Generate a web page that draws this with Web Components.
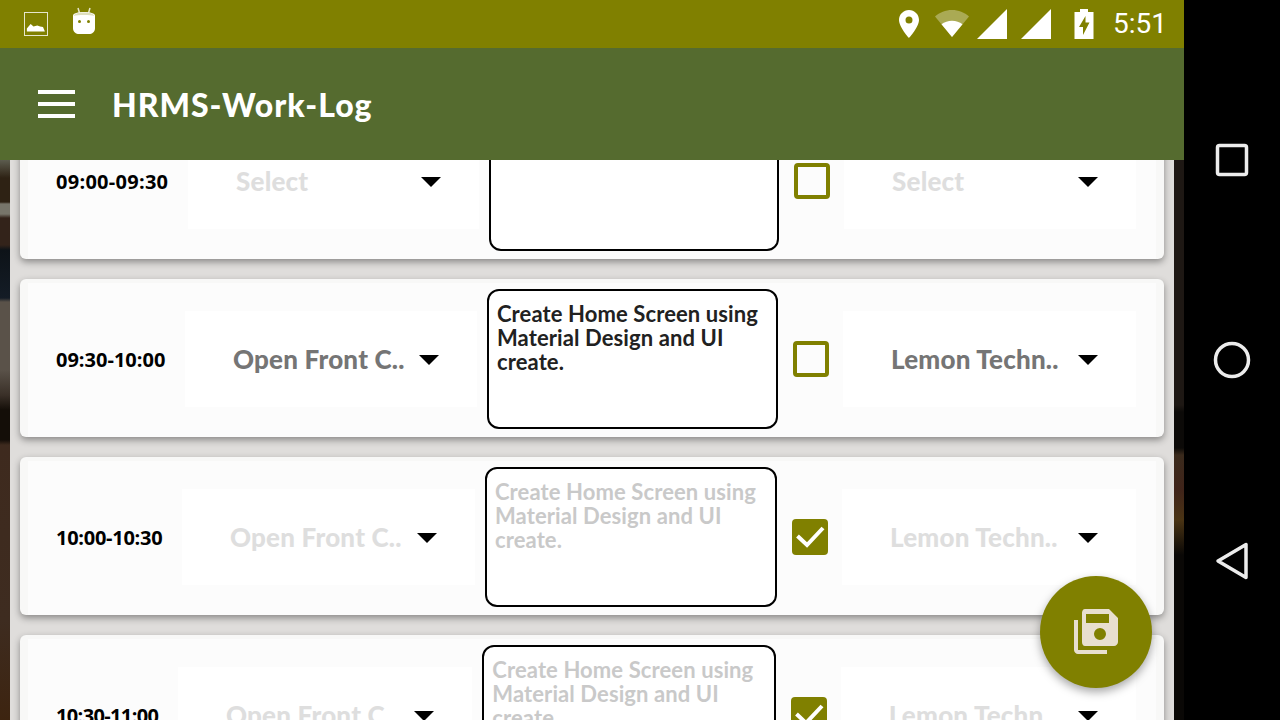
<!DOCTYPE html>
<html>
<head>
<meta charset="utf-8">
<style>
    html, body { margin: 0; height: 100%; background: #000; overflow: hidden; }
    body { display: flex; width: 1280px; height: 720px; }
</style>
</head>
<body>
<work-log-screen>
    <status-bar></status-bar>
    <app-bar title="HRMS-Work-Log"></app-bar>
    <log-list>
        <log-row time="09:00-09:30" time-width="112" project="Select" company="Select" faded-select check="off"></log-row>
        <log-row time="09:30-10:00" time-width="109" project="Open Front C.." company="Lemon Techn.." note="Create Home Screen using Material Design and UI create." check="off"></log-row>
        <log-row time="10:00-10:30" time-width="106" project="Open Front C.." company="Lemon Techn.." note="Create Home Screen using Material Design and UI create." faded check="on"></log-row>
        <log-row time="10:30-11:00" time-width="102" project="Open Front C.." company="Lemon Techn.." note="Create Home Screen using Material Design and UI create." faded check="on"></log-row>
    </log-list>
    <save-fab></save-fab>
</work-log-screen>
<nav-bar></nav-bar>

<script>
class WorkLogScreen extends HTMLElement {
    constructor() {
        super();
        this.attachShadow({ mode: "open" });
    }
    connectedCallback() {
        this.shadowRoot.innerHTML = `
            <style>
                :host {
                    display: flex;
                    flex-direction: column;
                    position: relative;
                    width: 1184px;
                    height: 720px;
                    overflow: hidden;
                    background-repeat: no-repeat;
                    background-size: 10px 100%;
                    background-position: left top, right top;
                    background-image:
                        linear-gradient(#5c5c4e 160px, #2e2214 178px, #2e2214 202px, #77756a 204px, #77756a 214px, #33231a 218px, #33231a 245px, #0d1318 250px, #141c26 298px, #5a5249 302px, #5a5249 370px, #3a3028 395px, #140e08 410px, #140e08 440px, #3e2a1e 445px, #3e2c20 620px, #3d2410 720px),
                        linear-gradient(#1e1814 160px, #1e1814 405px, #0c0a08 412px, #0c0a08 448px, #3a2a1c 455px, #40241a 490px, #4a3414 520px, #0a0806 555px, #0a0806 720px);
                }
            </style>
            <slot></slot>
        `;
    }
}
customElements.define("work-log-screen", WorkLogScreen);

class StatusBar extends HTMLElement {
    constructor() {
        super();
        this.attachShadow({ mode: "open" });
    }
    connectedCallback() {
        this.shadowRoot.innerHTML = `
            <style>
                :host {
                    display: flex;
                    align-items: center;
                    flex: none;
                    height: 48px;
                    background: #808000;
                    position: relative;
                    z-index: 2;
                }
                svg { display: block; flex: none; }
                .left { display: flex; align-items: center; margin-left: 24px; gap: 24px; }
                .right { display: flex; align-items: center; margin-left: auto; margin-right: 17px; }
                .time {
                    font: 400 28px Roboto, sans-serif;
                    color: #fff;
                    margin-left: 19px;
                    line-height: 48px;
                }
            </style>
            <div class="left">
                <svg width="24" height="24" viewBox="0 0 24 24">
                    <rect x="0.5" y="0.5" width="23" height="23" fill="none" stroke="#e6e6cc" stroke-width="1"/>
                    <path d="M3 20V17L7 12.500L10 15L14 14L17 15L20 15.500L22 20Z" fill="#fff" transform="translate(0 -0.500) scale(.95 1)"/>
                </svg>
                <svg width="24" height="28" viewBox="0 0 24 28" style="margin-bottom:6px">
                    <path d="M6 1L7.500 6M18 1L16.500 6" stroke="#e6e6cc" stroke-width="1.500" fill="none"/>
                    <path d="M1 8.500C1 6.500 6 5 12 5S23 6.500 23 8.500V21C23 25 20 27 17 27H7C4 27 1 25 1 21Z" fill="#fff"/>
                    <path d="M2 9C2 7 6 5.500 12 5.500S22 7 22 9C19 7.800 5 7.800 2 9Z" fill="#dfdfbf"/>
                    <circle cx="7.500" cy="14.500" r="1.500" fill="#808000"/>
                    <circle cx="16.500" cy="14.500" r="1.500" fill="#808000"/>
                </svg>
            </div>
            <div class="right">
                <svg width="22" height="30" viewBox="0 0 22 30">
                    <path fill-rule="evenodd" d="M11 1C5.500 1 1 5.400 1 11C1 18 11 29 11 29S21 18 21 11C21 5.400 16.500 1 11 1ZM11 14.500A3.500 3.500 0 1 1 11 7.500A3.500 3.500 0 0 1 11 14.500Z" fill="#fff"/>
                </svg>
                <svg width="36" height="30" viewBox="0 0 36 30" style="margin-left:14px">
                    <path d="M18 28L1 7.500C5.500 3.500 11.500 1 18 1S30.500 3.500 35 7.500Z" fill="#fff" opacity=".33"/>
                    <path d="M18 28L7.500 15.200C10.500 13 14 11.800 18 11.800S25.500 13 28.500 15.200Z" fill="#fff"/>
                </svg>
                <svg width="30" height="30" viewBox="0 0 30 30" style="margin-left:7px">
                    <path d="M0 30L30 0V30Z" fill="#fff"/>
                </svg>
                <svg width="30" height="30" viewBox="0 0 30 30" style="margin-left:14px">
                    <path d="M0 30L30 0V30Z" fill="#fff"/>
                </svg>
                <svg width="20" height="30" viewBox="0 0 20 30" style="margin-left:23px">
                    <path fill-rule="evenodd" d="M6 0H14V3H19.500V30H.5V3H6ZM11.500 7L5 18H9V26L15.500 13.500H11.500Z" fill="#fff"/>
                </svg>
                <span class="time">5:51</span>
            </div>
        `;
    }
}
customElements.define("status-bar", StatusBar);

class AppBar extends HTMLElement {
    constructor() {
        super();
        this.attachShadow({ mode: "open" });
    }
    connectedCallback() {
        this.shadowRoot.innerHTML = `
            <style>
                :host {
                    display: flex;
                    align-items: center;
                    flex: none;
                    height: 112px;
                    background: #556b2f;
                    position: relative;
                    z-index: 2;
                }
                .burger {
                    display: flex;
                    flex-direction: column;
                    gap: 8px;
                    margin-left: 38px;
                    width: 37px;
                }
                .burger i { display: block; height: 4px; background: #fff; }
                h1 {
                    margin: 0 0 0 37px;
                    color: #fff;
                    font: 900 32px Lato, sans-serif;
                    letter-spacing: 1px;
                }
            </style>
            <div class="burger"><i></i><i></i><i></i></div>
            <h1>${this.getAttribute("title")}</h1>
        `;
    }
}
customElements.define("app-bar", AppBar);

class LogList extends HTMLElement {
    constructor() {
        super();
        this.attachShadow({ mode: "open" });
    }
    connectedCallback() {
        this.shadowRoot.innerHTML = `
            <style>
                :host {
                    display: block;
                    flex: 1;
                    min-height: 0;
                    margin: 0 10px;
                    background: #dfdddb;
                    overflow: hidden;
                }
                .scroll {
                    display: flex;
                    flex-direction: column;
                    gap: 20px;
                    padding: 0 10px;
                    margin-top: -59px;
                }
            </style>
            <div class="scroll"><slot></slot></div>
        `;
    }
}
customElements.define("log-list", LogList);

class LogRow extends HTMLElement {
    constructor() {
        super();
        this.attachShadow({ mode: "open" });
    }
    connectedCallback() {
        const faded = this.hasAttribute("faded");
        const fadedSelect = faded || this.hasAttribute("faded-select");
        const note = this.getAttribute("note") || "";
        const checked = this.getAttribute("check") === "on";
        const timeWidth = Number(this.getAttribute("time-width"));
        this.shadowRoot.innerHTML = `
            <style>
                :host {
                    display: flex;
                    align-items: center;
                    height: 158px;
                    box-sizing: border-box;
                    padding: 2px 28px 0 36px;
                    background: linear-gradient(#fcfcfc, #fcfcfc) 8px 4px / calc(100% - 16px) 100% no-repeat, #f8f8f7;
                    border-radius: 6px;
                    box-shadow: 0 3px 7px rgba(0, 0, 0, .38);
                }
                .time {
                    flex: none;
                    width: ${timeWidth}px;
                    margin-right: 20px;
                    font: 700 20px "Open Sans", sans-serif;
                    letter-spacing: ${((timeWidth - 109) / 11).toFixed(2)}px;
                    color: #000;
                    white-space: nowrap;
                }
                .select {
                    flex: 1 1 5px;
                    min-width: 0;
                    height: 96px;
                    display: flex;
                    align-items: center;
                    background: #fff;
                    font: 900 26px Lato, sans-serif;
                    letter-spacing: .2px;
                    white-space: nowrap;
                    color: ${fadedSelect ? "#dedede" : "#757575"};
                }
                .select.last { flex-basis: 6px; }
                .select span { flex: 1; margin-left: 48px; }
                .arrow {
                    flex: none;
                    width: 0;
                    height: 0;
                    margin: 2px 38px 0 0;
                    border-left: 10px solid transparent;
                    border-right: 10px solid transparent;
                    border-top: 10px solid #000;
                }
                .note {
                    flex: 1 1 4px;
                    min-width: 0;
                    box-sizing: border-box;
                    height: 140px;
                    margin-left: 10px;
                    display: flex;
                    background: #fff;
                    border: 2px solid #000;
                    border-radius: 12px;
                }
                .note div {
                    margin: 11px 8px 0;
                    font: 700 22px/24px Lato, sans-serif;
                    letter-spacing: .1px;
                    color: ${faded ? "#c9c9c9" : "#212121"};
                }
                .check {
                    flex: none;
                    display: flex;
                    width: 36px;
                    height: 36px;
                    box-sizing: border-box;
                    margin: 0 14px 0 15px;
                    border-radius: 4px;
                    border: ${checked ? "none" : "4px solid #808000"};
                    background: ${checked ? "#808000" : "transparent"};
                }
                .check svg { display: block; }
            </style>
            <div class="time">${this.getAttribute("time")}</div>
            <div class="select"><span>${this.getAttribute("project")}</span><div class="arrow"></div></div>
            <div class="note"><div>${note}</div></div>
            <div class="check">${checked ? `<svg width="36" height="36" viewBox="0 0 36 36"><path d="M5.500 17L15 26L31 9" fill="none" stroke="#fff" stroke-width="4"/></svg>` : ""}</div>
            <div class="select last"><span>${this.getAttribute("company")}</span><div class="arrow"></div></div>
        `;
    }
}
customElements.define("log-row", LogRow);

class SaveFab extends HTMLElement {
    constructor() {
        super();
        this.attachShadow({ mode: "open" });
    }
    connectedCallback() {
        this.shadowRoot.innerHTML = `
            <style>
                :host {
                    position: absolute;
                    left: 1040px;
                    top: 576px;
                    width: 112px;
                    height: 112px;
                    border-radius: 50%;
                    background: #808000;
                    box-shadow: 0 4px 10px rgba(0, 0, 0, .35);
                    display: flex;
                    align-items: center;
                    justify-content: center;
                    z-index: 3;
                }
            </style>
            <svg width="44" height="46" viewBox="0 0 44 46">
                <path d="M0 11H4V41H33V45H4C2 45 0 43 0 41Z" fill="#e8dfcf"/>
                <path fill-rule="evenodd" d="M11 0H35L44 9V33C44 35 42 37 40 37H11C9 37 8 35 8 33V4C8 2 9 0 11 0ZM12 5V14H35V5ZM26 19A6 6 0 1 0 26 31A6 6 0 1 0 26 19Z" fill="#e8dfcf"/>
            </svg>
        `;
    }
}
customElements.define("save-fab", SaveFab);

class NavBar extends HTMLElement {
    constructor() {
        super();
        this.attachShadow({ mode: "open" });
    }
    connectedCallback() {
        this.shadowRoot.innerHTML = `
            <style>
                :host {
                    display: flex;
                    flex-direction: column;
                    align-items: center;
                    width: 96px;
                    height: 720px;
                    background: #000;
                }
                svg { display: block; flex: none; }
            </style>
            <svg width="34" height="34" viewBox="0 0 34 34" style="margin-top:143px">
                <rect x="2.500" y="2.500" width="29" height="29" rx="2" fill="none" stroke="#ececec" stroke-width="3.500"/>
            </svg>
            <svg width="38" height="38" viewBox="0 0 38 38" style="margin-top:164px">
                <circle cx="19" cy="19" r="16.500" fill="none" stroke="#ececec" stroke-width="3.500"/>
            </svg>
            <svg width="34" height="40" viewBox="0 0 34 40" style="margin-top:162px">
                <path d="M3 20L31 3.500V36.500Z" fill="none" stroke="#ececec" stroke-width="3.500" stroke-linejoin="round"/>
            </svg>
        `;
    }
}
customElements.define("nav-bar", NavBar);
</script>
</body>
</html>
